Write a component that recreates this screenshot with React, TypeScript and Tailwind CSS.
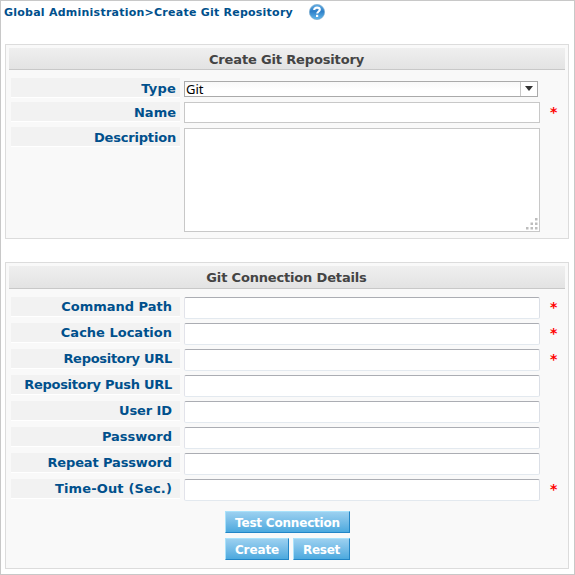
import React from "react";

const FONT = "font-['DejaVu_Sans',sans-serif]";

function Star() {
  return <span className="ml-[10px] text-[14px] leading-[21px] font-bold text-[#f00]">*</span>;
}

function Label({ text, pad, tracking = "" }: { text: string; pad: string; tracking?: string }) {
  return (
    <div
      className={`mr-1 h-5 w-[169px] shrink-0 border-b border-white bg-[#f2f2f2] text-right text-[13px] font-bold whitespace-nowrap text-[#00508c] ${pad} ${tracking}`}
    >
      {text}
    </div>
  );
}

function Header({ text, size }: { text: string; size: string }) {
  return (
    <div
      className={`border-b border-[#c8c8c8] bg-linear-to-b from-[#efefef] to-[#e3e3e3] text-center text-[13px] leading-[24px] font-bold text-[#444] ${size}`}
    >
      {text}
    </div>
  );
}

function Button({ text, size }: { text: string; size: string }) {
  return (
    <button
      className={`h-[22px] border border-t-[#a9e2fb] border-r-[#2285c6] border-b-[#2285c6] border-l-[#a9e2fb] bg-linear-to-b from-[#9bd0f0] to-[#4ba9de] pt-px text-center text-[12px] leading-[20px] font-bold whitespace-nowrap text-white ${size}`}
    >
      {text}
    </button>
  );
}

const fields: { label: string; required?: boolean; tracking?: string }[] = [
  { label: "Command Path", required: true },
  { label: "Cache Location", required: true },
  { label: "Repository URL", required: true, tracking: "tracking-[-0.29px]" },
  { label: "Repository Push URL", tracking: "tracking-[-0.27px]" },
  { label: "User ID", tracking: "tracking-[-0.1px]" },
  { label: "Password" },
  { label: "Repeat Password", tracking: "tracking-[-0.13px]" },
  { label: "Time-Out (Sec.)", required: true, tracking: "tracking-[0.15px]" },
];

export default function App() {
  return (
    <div className={`h-[575px] w-[575px] overflow-hidden border border-[#c8c8c8] bg-white pl-1 ${FONT}`}>
      <div className="flex h-[43px] items-start">
        <h1 className="mt-1 -ml-px w-[305px] text-[11px] leading-4 font-bold tracking-[0.24px] whitespace-nowrap text-[#00508c]">
          Global Administration&gt;Create Git Repository
        </h1>
        <svg className="mt-[3px]" width="16" height="16" viewBox="0 0 16 16">
          <defs>
            <linearGradient id="help" x1="0" y1="0" x2="0" y2="1">
              <stop offset="0" stopColor="#62aee5" />
              <stop offset="0.45" stopColor="#2d7fc8" />
              <stop offset="1" stopColor="#63b8ec" />
            </linearGradient>
          </defs>
          <circle cx="8" cy="8" r="7.6" fill="url(#help)" stroke="#79aacd" strokeWidth="0.7" />
          <path d="M5.2 6C5.2 4.4 6.3 3.6 8 3.6s2.8.9 2.8 2.2c0 1.6-2.6 1.8-2.6 3.8" fill="none" stroke="white" strokeWidth="2.1" />
          <rect x="7" y="10.8" width="2.2" height="2.2" fill="white" />
        </svg>
      </div>

      <section className="h-[195px] w-[564px] border border-[#dcdcdc] bg-[#f9f9f9] px-[3px] pt-[3px]">
        <Header text="Create Git Repository" size="h-[22px] pr-px tracking-[-0.15px]" />
        <div className="mt-2 ml-[2px] flex h-6">
          <Label text="Type" pad="pr-1 leading-[22px]" tracking="tracking-[0.2px]" />
          <div className="mt-[3px] flex h-4 w-[354px] border border-[#aaa] bg-linear-to-b from-[#f8f8f8] to-white to-60%">
            <span className="flex-1 pl-px font-['Noto_Sans',sans-serif] text-[13px] leading-[15px] text-black">Git</span>
            <span className="flex w-[17px] justify-center border-l border-[#c8c8c8] bg-white">
              <svg className="mt-1" width="8" height="5" viewBox="0 0 8 5">
                <path d="M0 0H8L4 5Z" fill="#333" />
              </svg>
            </span>
          </div>
        </div>
        <div className="ml-[2px] flex h-[26px]">
          <Label text="Name" pad="pr-1 leading-[22px]" />
          <input className="h-[21px] w-[356px] border border-[#c8c8c8] bg-white" />
          <Star />
        </div>
        <div className="-mt-px ml-[2px] flex">
          <Label text="Description" pad="pr-1 leading-[22px]" tracking="tracking-[-0.18px]" />
          <div className="mt-px flex h-[104px] w-[356px] items-end justify-end border border-[#c8c8c8] bg-white pr-px pb-px">
            <svg width="12" height="12" viewBox="0 0 12 12" fill="#bdbdbd">
              <path d="M9 0h2.5v2.5H9zM4.5 4.5H7V7H4.5zM9 4.5h2.5V7H9zM0 9h2.5v2.5H0zM4.5 9H7v2.5H4.5zM9 9h2.5v2.5H9z" />
            </svg>
          </div>
        </div>
      </section>

      <section className="mt-[23px] h-[307px] w-[564px] border border-[#dcdcdc] bg-[#f9f9f9] px-[3px] pt-[3px]">
        <Header text="Git Connection Details" size="h-[23px] pr-px tracking-[-0.17px]" />
        <div className="mt-2 ml-[2px]">
          {fields.map((f) => (
            <div key={f.label} className="flex h-[26px]">
              <Label text={f.label} pad="pr-2 leading-[20px]" tracking={f.tracking} />
              <input className="h-[22px] w-[356px] rounded-[2px] border border-t-[#abadb3] border-r-[#dbdfe6] border-b-[#e3e9ef] border-l-[#e2e3ea] bg-white" />
              {f.required && <Star />}
            </div>
          ))}
        </div>
        <div className="mt-[6px] ml-[216px] flex w-[125px] flex-wrap justify-between gap-y-[5px]">
          <Button text="Test Connection" size="w-[125px] tracking-[-0.2px]" />
          <Button text="Create" size="w-[64px] tracking-[-0.1px]" />
          <Button text="Reset" size="w-[57px] tracking-[-0.3px]" />
        </div>
      </section>
    </div>
  );
}
